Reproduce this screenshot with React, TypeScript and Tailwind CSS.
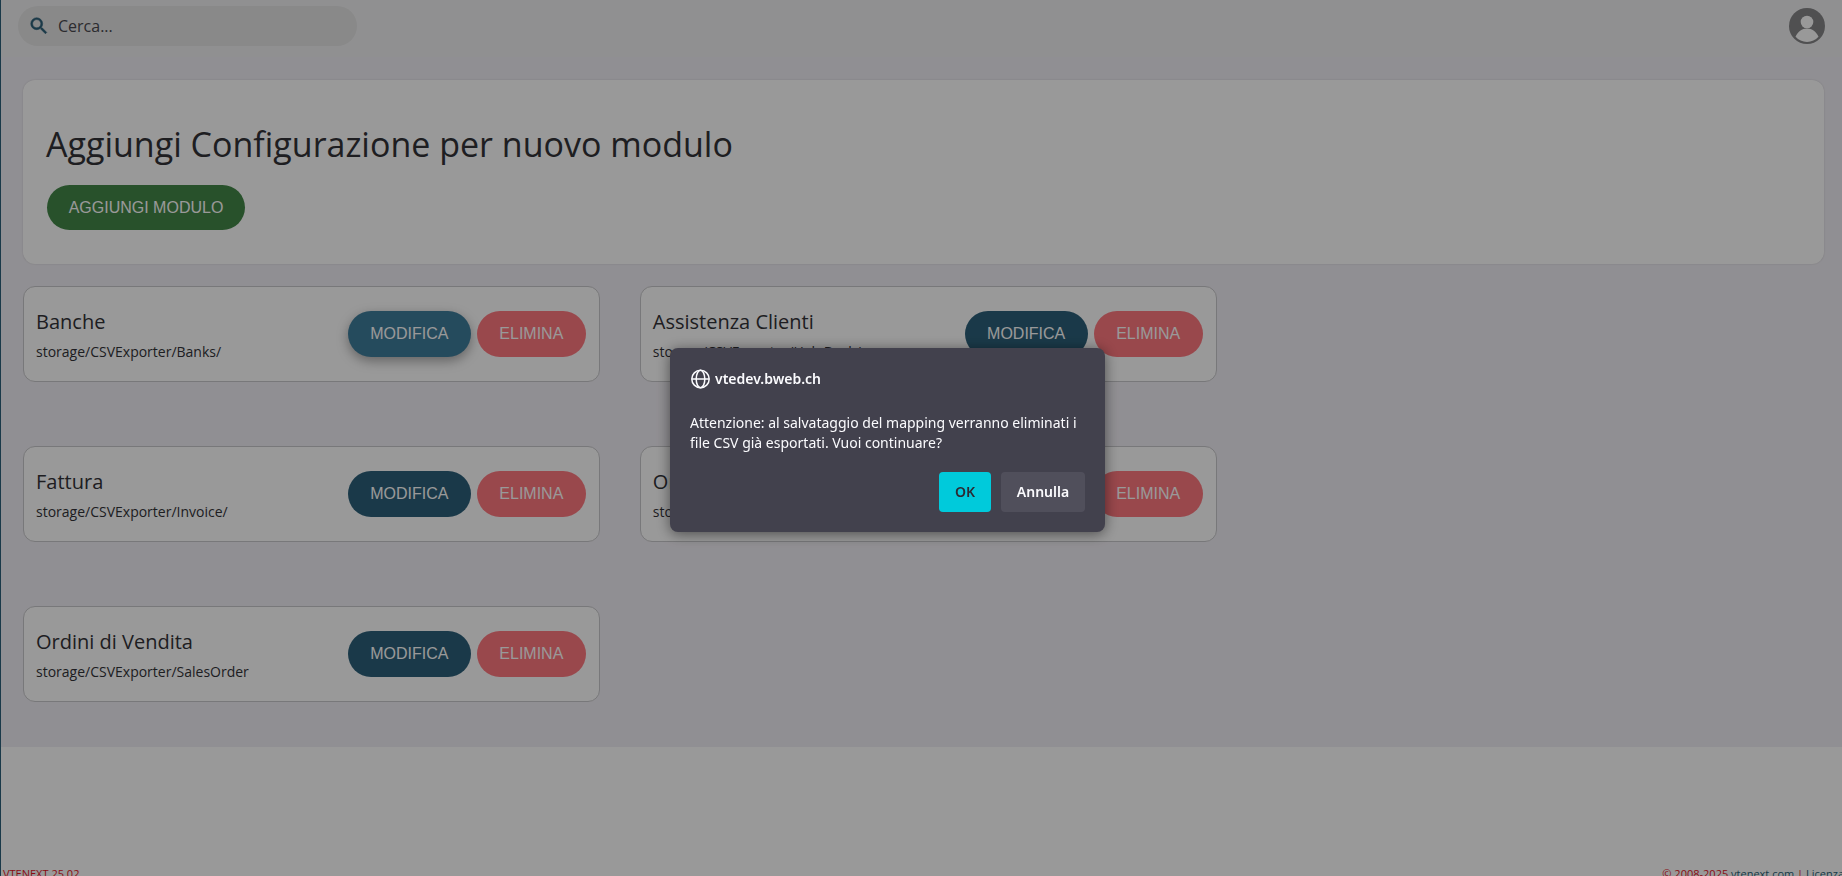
import { useState } from 'react'

type ModuleConfig = {
  name: string
  path: string
}

const modules: ModuleConfig[] = [
  { name: 'Banche', path: 'storage/CSVExporter/Banks/' },
  { name: 'Assistenza Clienti', path: 'storage/CSVExporter/HelpDesk/' },
  { name: 'Fattura', path: 'storage/CSVExporter/Invoice/' },
  { name: 'Ordini di Acquisto', path: 'storage/CSVExporter/PurchaseOrder' },
  { name: 'Ordini di Vendita', path: 'storage/CSVExporter/SalesOrder' },
]

const pill =
  "rounded-full font-['Liberation_Sans',Arial,sans-serif] text-base uppercase text-white"

function Header() {
  return (
    <header className="flex h-[57px] items-start justify-between bg-[#f1f1f2] pt-1.5 pr-[17px] pl-[17px]">
      <label className="flex h-10 w-[339px] items-center rounded-full bg-[#e4e4e5] pl-2.5 text-[#2c5f78]">
        <svg width="22" height="22" viewBox="0 0 24 24" fill="currentColor" className="shrink-0">
          <path
            stroke="currentColor"
            strokeWidth="0.6"
            d="M15.500 14h-.79l-.28-.27A6.471 6.471 0 0 0 16 9.500 6.500 6.500 0 1 0 9.500 16c1.610 0 3.090-.59 4.230-1.570l.27.28v.79l5 4.990L20.490 19l-4.990-5zm-6 0C7.010 14 5 11.990 5 9.500S7.010 5 9.500 5 14 7.010 14 9.500 11.990 14 9.500 14z"
          />
        </svg>
        <input
          type="text"
          aria-label="Cerca"
          placeholder="Cerca..."
          className="ml-2 w-full bg-transparent text-base text-[#4a4a50] outline-none placeholder:text-[#4a4a50]"
        />
      </label>
      <button type="button" aria-label="Profilo" className="mt-0.5">
        <svg width="36" height="36" viewBox="0 0 36 36">
          <circle cx="18" cy="18" r="18" fill="#858587" />
          <circle cx="18" cy="14" r="6.3" fill="#fff" />
          <path d="M6.500 28.800C8.500 24 13 20.600 18 20.600S27.500 24 29.500 28.800C26.500 32 22.500 34 18 34S9.500 32 6.500 28.800Z" fill="#fff" />
        </svg>
      </button>
    </header>
  )
}

function ModuleCard({ module, active }: { module: ModuleConfig; active: boolean }) {
  return (
    <article className="flex h-24 items-center rounded-xl border border-[#c8c8cb] bg-white pr-[13px] pl-3">
      <div className="min-w-0 flex-1 pt-[3px]">
        <h2 className="text-xl leading-7 text-[#333338]">{module.name}</h2>
        <p className="mt-1 truncate text-sm leading-6 text-[#333338]">{module.path}</p>
      </div>
      <button
        type="button"
        className={
          active
            ? `${pill} h-[46px] w-[123px] bg-[#3f7d9c] shadow-[0_4px_12px_rgba(0,0,0,0.35)]`
            : `${pill} h-[46px] w-[123px] bg-[#2c607a]`
        }
      >
        Modifica
      </button>
      <button type="button" className={`${pill} ml-1.5 h-[46px] w-[109px] bg-[#ff787f]`}>
        Elimina
      </button>
    </article>
  )
}

function ConfirmDialog({ onClose }: { onClose: () => void }) {
  return (
    <div className="fixed inset-0 z-10 flex items-start justify-center bg-black/40">
      <div
        role="dialog"
        aria-modal="true"
        aria-labelledby="dialog-origin"
        className="mt-[348px] mr-[67px] w-[435px] rounded-lg bg-[#42414d] p-5 font-['Noto_Sans',sans-serif] text-sm text-[#fbfbfe] shadow-[0_2px_14px_rgba(0,0,0,0.5)]"
      >
        <div className="flex h-[22px] items-center gap-1">
          <svg width="21" height="20" viewBox="0 0 20 20" fill="none" stroke="currentColor" strokeWidth="1.5">
            <circle cx="10" cy="10" r="8.700" />
            <ellipse cx="10" cy="10" rx="4.300" ry="8.700" />
            <path d="M1.500 10h17" />
          </svg>
          <h2 id="dialog-origin" className="font-semibold">vtedev.bweb.ch</h2>
        </div>
        <p className="mt-[23px] leading-5">
          Attenzione: al salvataggio del mapping verranno eliminati i file CSV già esportati. Vuoi continuare?
        </p>
        <div className="mt-[19px] flex justify-end gap-2.5 font-semibold">
          <button type="button" onClick={onClose} className="h-10 w-[52px] rounded bg-[#00cadb] text-[#2b2a33]">
            OK
          </button>
          <button type="button" onClick={onClose} className="h-10 w-[84px] rounded bg-[#504f5b]">
            Annulla
          </button>
        </div>
      </div>
    </div>
  )
}

function Footer() {
  return (
    <footer className="flex justify-between pt-[119px] pl-0.5 text-[11px] leading-4 whitespace-nowrap text-[#e4141e]">
      <span>VTENEXT 25.02</span>
      <span className="-mr-0.5">
        © 2008-2025 <a href="#vtenext" className="text-[#2c5f78]">vtenext.com</a> |{' '}
        <a href="#licenza" className="text-[#2c5f78]">Licenza</a>
      </span>
    </footer>
  )
}

export default function App() {
  const [isOpen, setIsOpen] = useState(true)

  return (
    <div className="h-screen overflow-hidden border-l border-[#2c607a] bg-white font-['Open_Sans',sans-serif]">
      <Header />
      <main className="bg-[#f1eff5] pt-[23px] pb-[45px] pl-[22px]">
        <section className="mr-[18px] h-[184px] rounded-xl bg-white px-[23px] pt-[39px] shadow-[0_0_2px_rgba(0,0,0,0.15)]">
          <h1 className="text-[34px] leading-[50px] text-[#333338]">Aggiungi Configurazione per nuovo modulo</h1>
          <button type="button" className={`${pill} mt-4 ml-px h-[45px] w-[198px] bg-[#438748]`}>
            Aggiungi modulo
          </button>
        </section>
        <div className="mt-[22px] grid w-2/3 grid-cols-2 gap-x-10 gap-y-16 pr-[19px]">
          {modules.map((module) => (
            <ModuleCard key={module.name} module={module} active={module.name === 'Banche'} />
          ))}
        </div>
      </main>
      <Footer />
      {isOpen && <ConfirmDialog onClose={() => setIsOpen(false)} />}
    </div>
  )
}
